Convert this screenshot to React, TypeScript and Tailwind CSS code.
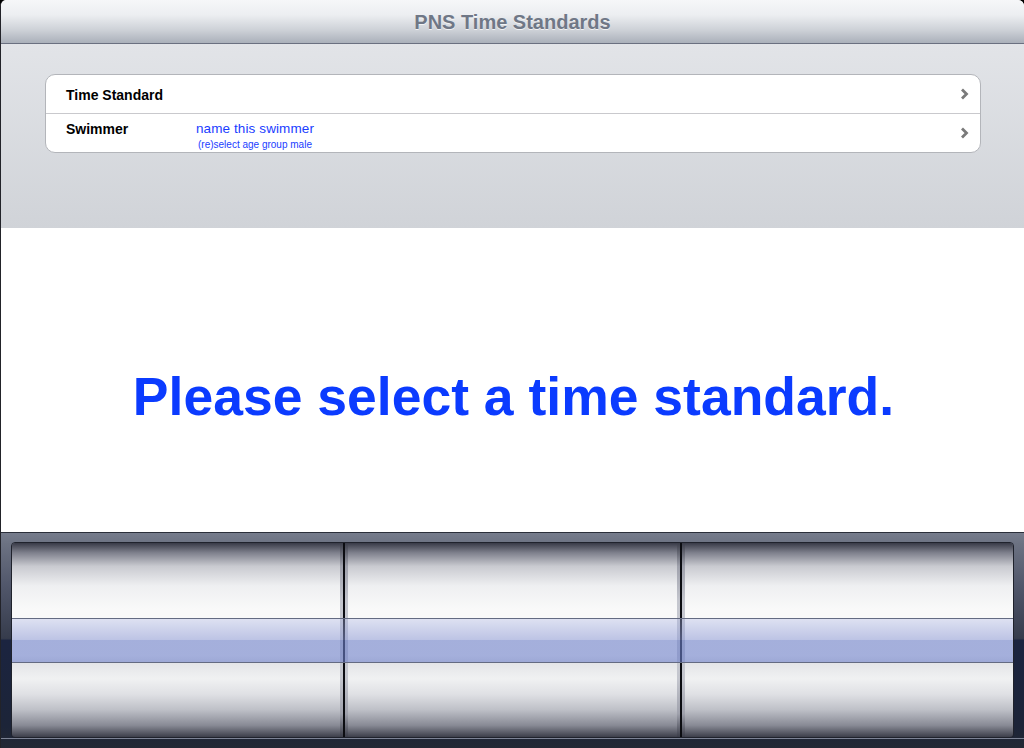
import React from "react";

function Chevron() {
  return (
    <svg width="9" height="12" viewBox="0 0 9 12" className="shrink-0">
      <path d="M2 1.5 L6.5 6 L2 10.5" fill="none" stroke="#7a7a7a" strokeWidth="2.8" strokeLinecap="butt" strokeLinejoin="miter" />
    </svg>
  );
}

function Separator() {
  return (
    <div className="w-[8px] h-full flex shrink-0">
      <div className="w-[3px] h-full bg-[linear-gradient(to_bottom,#3a3c48_0%,#9fa1ac_12%,#c4c6ce_30%,#c8cad2_50%,#c4c6ce_70%,#9fa1ac_88%,#3a3c48_100%)]" />
      <div className="w-[2px] h-full bg-[#0c0d12]" />
      <div className="w-[3px] h-full bg-[linear-gradient(to_bottom,#3a3c48_0%,#9fa1ac_12%,#c4c6ce_30%,#c8cad2_50%,#c4c6ce_70%,#9fa1ac_88%,#3a3c48_100%)]" />
    </div>
  );
}

function Wheel() {
  return (
    <div className="flex-1 h-full bg-[linear-gradient(to_bottom,#383a47_0%,#7e808c_5%,#c9cad0_12%,#eeeff1_22%,#f9f9f9_34%,#f9f9f9_58%,#e4e5e8_62%,#f0f1f2_70%,#dfe0e4_78%,#bec0c7_86%,#888a95_94%,#3c3e4a_100%)]" />
  );
}

export default function App() {
  return (
    <div className="w-[1024px] h-[748px] bg-black overflow-hidden font-['Liberation_Sans',Arial,sans-serif]">
      <div className="h-full flex flex-col rounded-t-[6px] overflow-hidden border-l border-[#222329] bg-white">
        {/* Nav bar */}
        <div className="h-[44px] shrink-0 border-b border-[#6a7080] bg-[linear-gradient(to_bottom,#f6f7f9_0%,#eceef1_35%,#cdd1d7_70%,#aab0ba_100%)] flex items-center justify-center">
          <span className="text-[20px] font-bold text-[#6f7786] [text-shadow:0_1px_0_rgba(255,255,255,0.7)] leading-none">
            PNS Time Standards
          </span>
        </div>

        {/* Grouped table area */}
        <div className="h-[184px] shrink-0 pl-[44px] pr-[43px] pt-[30px] bg-[linear-gradient(to_bottom,#e2e4e8_0%,#d0d3d8_100%)]">
          <div className="bg-white border border-[#b3b5ba] rounded-[10px]">
            <div className="h-[38px] flex items-center pl-[20px] pr-[11px]">
              <span className="flex-1 text-[14px] font-bold text-black leading-[16px] mt-[2px]">Time Standard</span>
              <div className="-mt-[1px]">
                <Chevron />
              </div>
            </div>
            <div className="h-[39px] border-t border-[#c9c9cd] flex pl-[20px] pr-[11px]">
              <div className="flex-1 flex pt-[7px]">
                <span className="w-[130px] shrink-0 text-[14px] font-bold text-black leading-[16px]">Swimmer</span>
                <div className="flex flex-col">
                  <span className="text-[13.5px] text-[#1a3dff] leading-[16px] tracking-[0.1px]">name this swimmer</span>
                  <span className="text-[10px] text-[#1a3dff] leading-[12px] mt-[2px] ml-[2px]">(re)select age group male</span>
                </div>
              </div>
              <div className="self-center -mt-[1px]">
                <Chevron />
              </div>
            </div>
          </div>
        </div>

        {/* Message area */}
        <div className="h-[304px] shrink-0 flex justify-center pt-[142px] pl-[2px] bg-white">
          <span className="text-[53.5px] font-bold text-[#0b3bff] leading-[53px] whitespace-nowrap">
            Please select a time standard.
          </span>
        </div>

        {/* Picker */}
        <div className="h-[216px] shrink-0 border-t border-[#2b2f3a] flex flex-col bg-[linear-gradient(to_bottom,#767c8c_0%,#6c7282_5%,#50566a_25%,#363c4c_49%,#1b2440_50%,#1c2438_90%,#232834_100%)]">
          <div className="h-[9px] shrink-0" />
          <div className="h-[196px] shrink-0 ml-[10px] mr-[10px] relative flex rounded-[4px] overflow-hidden border border-[#1f222c]">
            <Wheel />
            <Separator />
            <Wheel />
            <Separator />
            <Wheel />
            <div className="absolute left-0 right-0 top-[75px] h-[45px] border-y border-[#646b82] bg-[linear-gradient(to_bottom,rgba(170,180,228,0.35)_0%,rgba(140,152,212,0.55)_48%,rgba(108,126,200,0.6)_50%,rgba(108,126,200,0.6)_100%)]" />
          </div>
          <div className="flex-1 border-t border-[#7c8294]" />
        </div>
      </div>
    </div>
  );
}
